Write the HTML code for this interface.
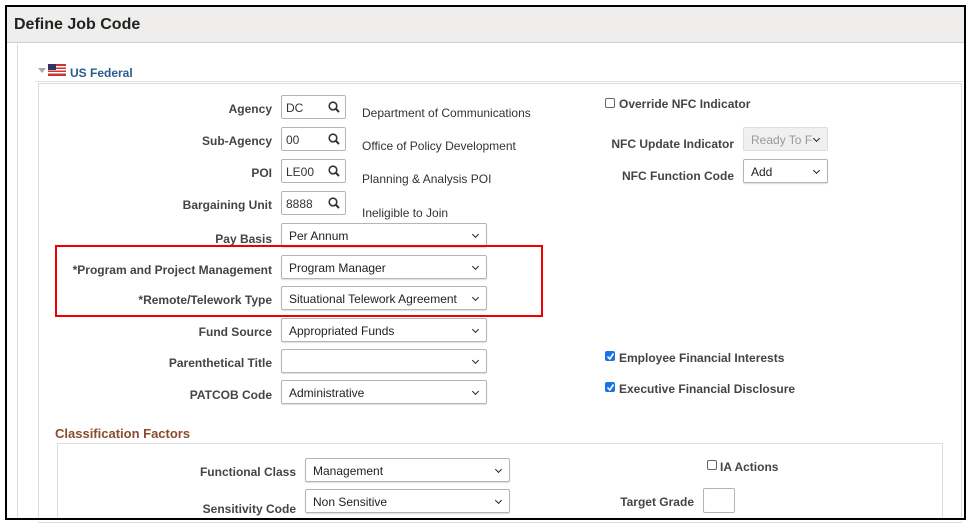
<!DOCTYPE html>
<html><head><meta charset="utf-8"><style>
*{box-sizing:border-box;margin:0;padding:0}
body{width:967px;height:522px;background:#fff;position:relative;overflow:hidden;font-family:"Liberation Sans",Arial,sans-serif;color:#333}
.a{position:absolute}
.lbl{position:absolute;font-size:12px;font-weight:bold;color:#444;text-align:right;white-space:nowrap}
.txt{position:absolute;font-size:12px;color:#333;white-space:nowrap}
.sel{position:absolute;height:24px;border:1px solid #b5b5b5;border-radius:2px;background:#fff;font-size:12px;color:#222;padding:5px 0 0 7px;white-space:nowrap;box-shadow:0 1px 1px #ddd}
.sel:after{content:"";position:absolute;right:8px;top:8px;width:4px;height:4px;border-right:1.5px solid #222;border-bottom:1.5px solid #222;transform:rotate(45deg)}
.inp{position:absolute;width:65px;height:24px;border:1px solid #b5b5b5;border-radius:2px;background:#fff;font-size:12px;padding:5px 0 0 4px}
.inp svg{position:absolute;right:5px;top:5px}
.cb{position:absolute;width:10px;height:10px;border:1px solid #666;border-radius:2px;background:#fff}
.cbk{position:absolute;width:10px;height:10px;border-radius:2px;background:#1a73e8}
</style></head><body>
<div class="a" style="left:7px;top:7px;width:957px;height:36px;background:#efeeec;border-bottom:1px solid #cfcfcf"></div>
<div class="a" style="left:14px;top:16px;font-size:16px;font-weight:bold;color:#222">Define Job Code</div>
<div class="a" style="left:17px;top:44px;width:1px;height:474px;background:#ddd"></div>
<div class="a" style="left:38px;top:68px;width:0;height:0;border-left:4px solid transparent;border-right:4px solid transparent;border-top:5px solid #aaa"></div>
<svg class="a" style="left:48px;top:64px" width="18" height="12"><rect width="18" height="12" fill="#c33"/><rect y="2" width="18" height="1.5" fill="#fff"/><rect y="5" width="18" height="1.5" fill="#fff"/><rect y="8" width="18" height="1.5" fill="#fff"/><rect width="8" height="6" fill="#336"/></svg>
<div class="a" style="left:70px;top:66px;font-size:12px;font-weight:bold;color:#2c5b8e">US Federal</div>
<div class="a" style="left:35px;top:81px;width:928px;height:1px;background:#ddd"></div>
<div class="a" style="left:38px;top:83px;width:924px;height:440px;border:1px solid #ddd"></div>

<div class="lbl" style="right:695px;top:102px">Agency</div>
<div class="inp" style="left:281px;top:95px">DC<svg width="12" height="12"><circle cx="5" cy="5" r="3.8" fill="none" stroke="#333" stroke-width="1.6"/><line x1="8" y1="8" x2="11" y2="11" stroke="#333" stroke-width="2"/></svg></div>
<div class="txt" style="left:362px;top:106px">Department of Communications</div>
<div class="lbl" style="right:695px;top:134px">Sub-Agency</div>
<div class="inp" style="left:281px;top:127px">00<svg width="12" height="12"><circle cx="5" cy="5" r="3.8" fill="none" stroke="#333" stroke-width="1.6"/><line x1="8" y1="8" x2="11" y2="11" stroke="#333" stroke-width="2"/></svg></div>
<div class="txt" style="left:362px;top:139px">Office of Policy Development</div>
<div class="lbl" style="right:695px;top:166px">POI</div>
<div class="inp" style="left:281px;top:159px">LE00<svg width="12" height="12"><circle cx="5" cy="5" r="3.8" fill="none" stroke="#333" stroke-width="1.6"/><line x1="8" y1="8" x2="11" y2="11" stroke="#333" stroke-width="2"/></svg></div>
<div class="txt" style="left:362px;top:172px">Planning &amp; Analysis POI</div>
<div class="lbl" style="right:695px;top:198px">Bargaining Unit</div>
<div class="inp" style="left:281px;top:191px">8888<svg width="12" height="12"><circle cx="5" cy="5" r="3.8" fill="none" stroke="#333" stroke-width="1.6"/><line x1="8" y1="8" x2="11" y2="11" stroke="#333" stroke-width="2"/></svg></div>
<div class="txt" style="left:362px;top:206px">Ineligible to Join</div>
<div class="lbl" style="right:695px;top:232px">Pay Basis</div>
<div class="sel" style="left:281px;top:223px;width:206px">Per Annum</div>
<div class="a" style="left:55px;top:245px;width:488px;height:72px;border:2px solid #e00"></div>
<div class="lbl" style="right:695px;top:263px">*Program and Project Management</div>
<div class="sel" style="left:281px;top:255px;width:206px">Program Manager</div>
<div class="lbl" style="right:695px;top:293px">*Remote/Telework Type</div>
<div class="sel" style="left:281px;top:286px;width:206px">Situational Telework Agreement</div>
<div class="lbl" style="right:695px;top:325px">Fund Source</div>
<div class="sel" style="left:281px;top:318px;width:206px">Appropriated Funds</div>
<div class="lbl" style="right:695px;top:356px">Parenthetical Title</div>
<div class="sel" style="left:281px;top:349px;width:206px"></div>
<div class="lbl" style="right:695px;top:388px">PATCOB Code</div>
<div class="sel" style="left:281px;top:380px;width:206px">Administrative</div>

<div class="cb" style="left:605px;top:98px"></div>
<div class="lbl" style="left:619px;top:97px;text-align:left">Override NFC Indicator</div>
<div class="lbl" style="right:233px;top:137px">NFC Update Indicator</div>
<div class="sel" style="left:743px;top:127px;width:85px;background:#f0f0f0;border-color:#ddd;color:#999;box-shadow:none;overflow:hidden">Ready To F</div>
<div class="lbl" style="right:233px;top:169px">NFC Function Code</div>
<div class="sel" style="left:743px;top:159px;width:85px">Add</div>
<div class="cbk" style="left:605px;top:351px"></div><svg class="a" style="left:606px;top:352px" width="9" height="9"><path d="M1.5 4.5 L3.8 7 L7.5 1.5" fill="none" stroke="#fff" stroke-width="1.6"/></svg>
<div class="lbl" style="left:619px;top:351px;text-align:left">Employee Financial Interests</div>
<div class="cbk" style="left:605px;top:382px"></div><svg class="a" style="left:606px;top:383px" width="9" height="9"><path d="M1.5 4.5 L3.8 7 L7.5 1.5" fill="none" stroke="#fff" stroke-width="1.6"/></svg>
<div class="lbl" style="left:619px;top:382px;text-align:left">Executive Financial Disclosure</div>

<div class="a" style="left:55px;top:426px;font-size:13px;font-weight:bold;color:#8a4b2e">Classification Factors</div>
<div class="a" style="left:57px;top:443px;width:886px;height:80px;border:1px solid #ddd"></div>
<div class="lbl" style="right:671px;top:465px">Functional Class</div>
<div class="sel" style="left:305px;top:458px;width:205px">Management</div>
<div class="lbl" style="right:671px;top:502px">Sensitivity Code</div>
<div class="sel" style="left:305px;top:489px;width:205px">Non Sensitive</div>
<div class="cb" style="left:707px;top:460px"></div>
<div class="lbl" style="left:720px;top:460px;text-align:left">IA Actions</div>
<div class="lbl" style="right:273px;top:495px">Target Grade</div>
<div class="a" style="left:703px;top:488px;width:32px;height:25px;border:1px solid #b5b5b5;border-radius:2px"></div>

<div class="a" style="left:0;top:519px;width:967px;height:3px;background:#fff"></div>
<div class="a" style="left:5px;top:5px;width:961px;height:515px;border:2px solid #000;z-index:10"></div>
</body></html>
